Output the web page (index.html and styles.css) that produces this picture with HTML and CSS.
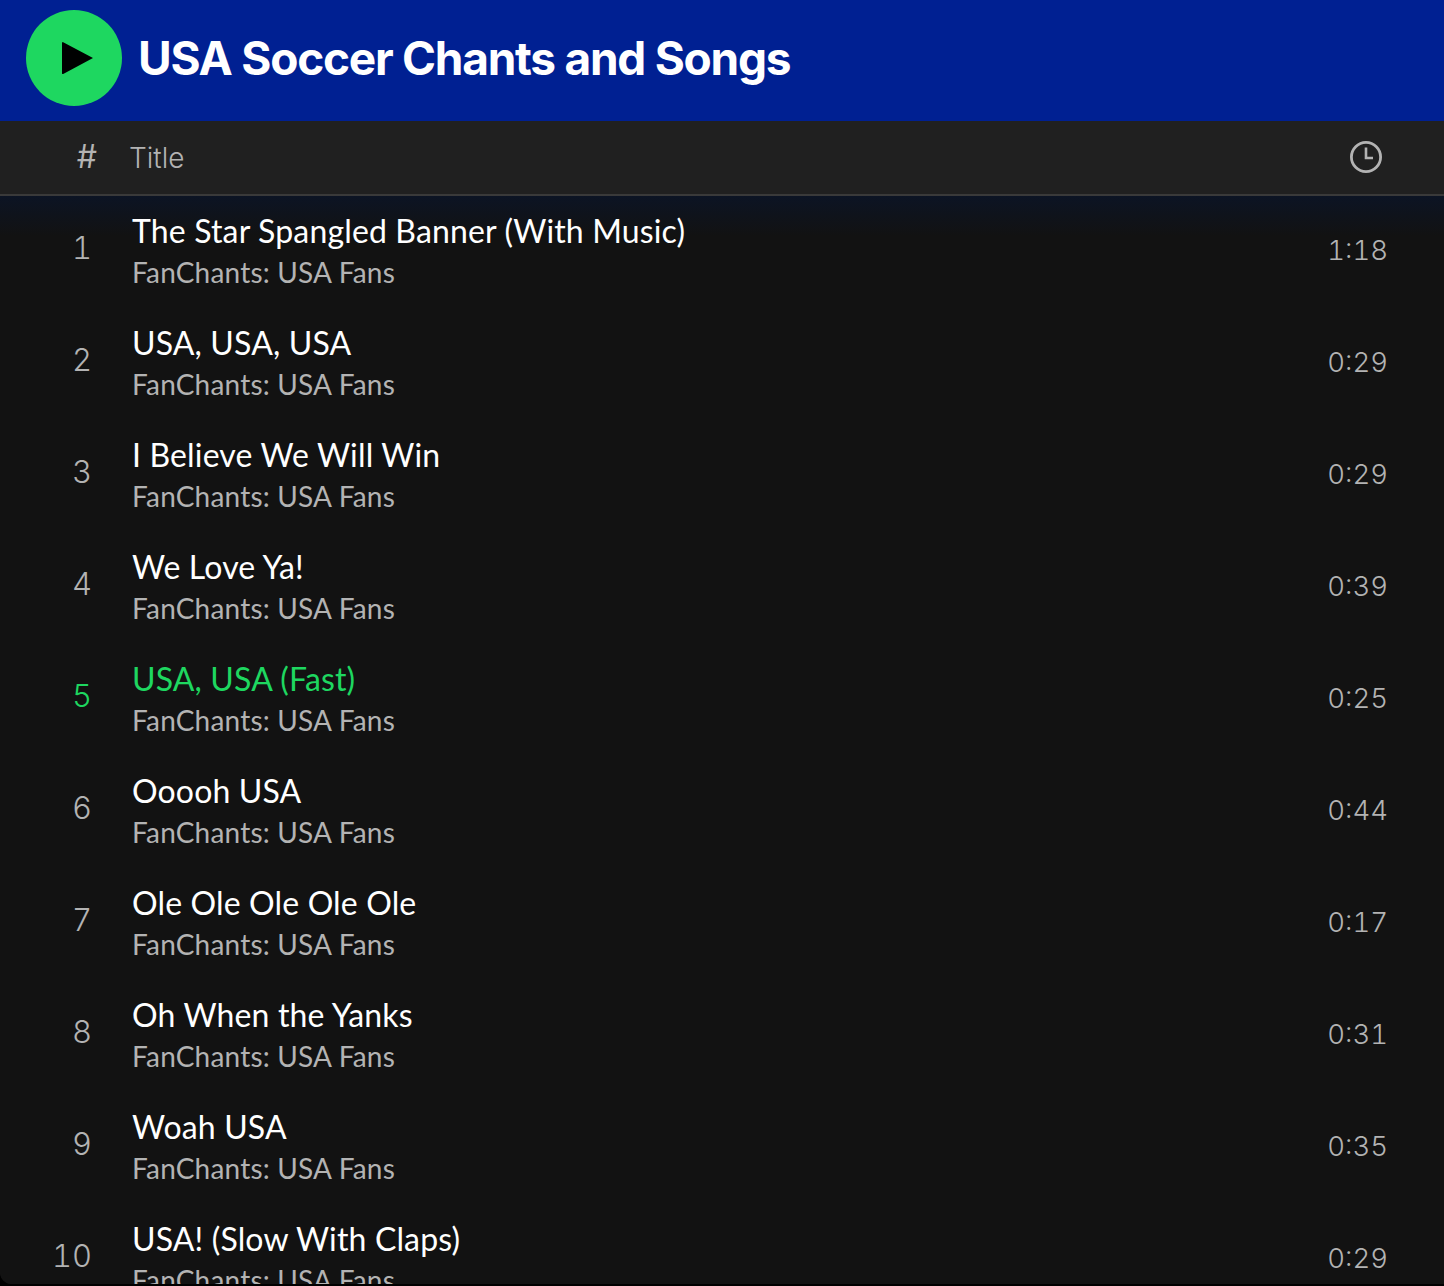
FILE: index.html
```html
<!DOCTYPE html>
<html lang="en">
<head>
<meta charset="utf-8">
<title>USA Soccer Chants and Songs</title>
<link rel="stylesheet" href="styles.css">
</head>
<body>
<main class="page">
  <header class="banner">
    <button class="play" aria-label="Play">
      <svg class="play-icon" viewBox="0 0 32 34" width="32" height="34"><path d="M1.2 1.2 31 17 1.2 33a.8.8 0 0 1-1.2-.7V1.9a.8.8 0 0 1 1.2-.7z"/></svg>
    </button>
    <h1 class="heading">USA Soccer Chants and Songs</h1>
  </header>
  <div class="columns">
    <span class="col-num">#</span>
    <span class="col-title">Title</span>
    <svg class="clock" viewBox="0 0 32 32" width="32" height="32" fill="none" stroke="currentColor"><circle cx="16" cy="16" r="14.6" stroke-width="2.8"/><path d="M16 6.5V17h7" stroke-width="2.6"/></svg>
  </div>
  <ol class="tracks">
    <li class="track"><span class="num">1</span><div class="info"><div class="name">The Star Spangled Banner (With Music)</div><div class="artist">FanChants: USA Fans</div></div><span class="time">1:18</span></li>
    <li class="track"><span class="num">2</span><div class="info"><div class="name">USA, USA, USA</div><div class="artist">FanChants: USA Fans</div></div><span class="time">0:29</span></li>
    <li class="track"><span class="num">3</span><div class="info"><div class="name">I Believe We Will Win</div><div class="artist">FanChants: USA Fans</div></div><span class="time">0:29</span></li>
    <li class="track"><span class="num">4</span><div class="info"><div class="name">We Love Ya!</div><div class="artist">FanChants: USA Fans</div></div><span class="time">0:39</span></li>
    <li class="track active"><span class="num">5</span><div class="info"><div class="name">USA, USA (Fast)</div><div class="artist">FanChants: USA Fans</div></div><span class="time">0:25</span></li>
    <li class="track"><span class="num">6</span><div class="info"><div class="name">Ooooh USA</div><div class="artist">FanChants: USA Fans</div></div><span class="time">0:44</span></li>
    <li class="track"><span class="num">7</span><div class="info"><div class="name">Ole Ole Ole Ole Ole</div><div class="artist">FanChants: USA Fans</div></div><span class="time">0:17</span></li>
    <li class="track"><span class="num">8</span><div class="info"><div class="name">Oh When the Yanks</div><div class="artist">FanChants: USA Fans</div></div><span class="time">0:31</span></li>
    <li class="track"><span class="num">9</span><div class="info"><div class="name">Woah USA</div><div class="artist">FanChants: USA Fans</div></div><span class="time">0:35</span></li>
    <li class="track"><span class="num">10</span><div class="info"><div class="name">USA! (Slow With Claps)</div><div class="artist">FanChants: USA Fans</div></div><span class="time">0:29</span></li>
  </ol>
</main>
</body>
</html>
```
FILE: styles.css
```css
html, body { margin: 0; padding: 0; height: 100%; background: #000; }
body { font-family: "Inter", "Liberation Sans", sans-serif; overflow: hidden; }
.page { height: 1284px; overflow: hidden; background: #121212; border-radius: 0 0 0 12px; display: flex; flex-direction: column; }
.banner { height: 121px; flex: none; background: #002092; display: flex; align-items: center; gap: 16px; padding: 0 0 6px 26px; box-sizing: border-box; }
.play { width: 96px; height: 96px; flex: none; border: 0; padding: 0; border-radius: 50%; background: #1ed760; display: flex; align-items: center; justify-content: center; }
.play-icon { display: block; margin-left: 8px; fill: #000; }
.heading { margin: 0; color: #fff; font-size: 46px; font-weight: 700; letter-spacing: -1.25px; white-space: nowrap; }
.columns { height: 75px; flex: none; box-sizing: border-box; background: #202020; border-bottom: 2px solid #3a3a3a; display: flex; align-items: center; padding: 0 62px 2px 0; color: #b3b3b3; font-size: 28px; }
.col-num { width: 97px; text-align: right; font-size: 32px; font-weight: 400; }
.col-title { margin-left: 32px; flex: 1; font-weight: 300; padding-top: 2px; }
.clock { display: block; color: #b3b3b3; }
.tracks { list-style: none; margin: 0; padding: 0; flex: 1; overflow: hidden; background: linear-gradient(#0c1424 0, #121212 40px); }
.track { height: 112px; display: flex; align-items: center; padding-right: 56px; box-sizing: border-box; }
.num { width: 92px; flex: none; text-align: right; color: #b3b3b3; font-size: 31px; font-weight: 300; font-feature-settings: "tnum"; margin-top: -10px; }
.info { margin-left: 40px; flex: 1; min-width: 0; margin-top: -2px; font-family: "Lato", "Liberation Sans", sans-serif; }
.name { color: #fff; font-size: 32px; letter-spacing: 0.15px; line-height: 42px; white-space: nowrap; }
.artist { color: #b3b3b3; font-size: 28px; letter-spacing: 0.2px; line-height: 40px; white-space: nowrap; }
.time { color: #b3b3b3; font-size: 27.5px; font-weight: 300; font-feature-settings: "tnum"; margin-top: -4px; }
.active .num, .active .name { color: #1ed760; }
```
